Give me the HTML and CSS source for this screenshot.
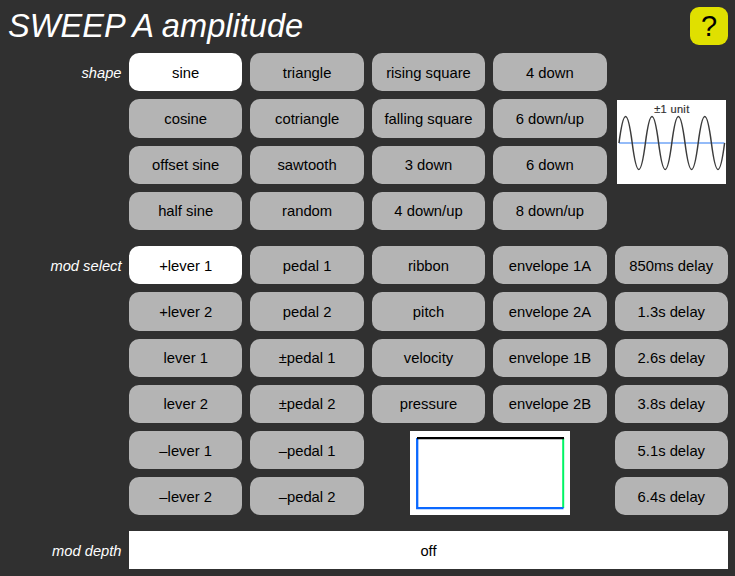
FILE: index.html
```
<!DOCTYPE html>
<html lang="en">
<head>
<meta charset="utf-8">
<title>SWEEP A amplitude</title>
<link rel="stylesheet" href="styles.css">
</head>
<body>
<header class="header">
  <h1 class="title">SWEEP A amplitude</h1>
  <button class="help">?</button>
</header>
<main>
  <section class="section">
    <div class="label">shape</div>
    <div class="grid">
      <button class="option selected">sine</button>
      <button class="option">triangle</button>
      <button class="option">rising square</button>
      <button class="option">4 down</button>
      <span></span>
      <button class="option">cosine</button>
      <button class="option">cotriangle</button>
      <button class="option">falling square</button>
      <button class="option">6 down/up</button>
      <svg class="wave" width="109" height="84" viewBox="0 0 109 84">
        <rect width="109" height="84" fill="#fff"/>
        <path d="M2 43H107.500" stroke="#94bbf8" stroke-width="2"/>
        <path d="M2 43c4.600-35.300 8.600-35.300 13.200 0s8.600 35.300 13.200 0s8.600-35.300 13.200 0s8.600 35.300 13.200 0s8.600-35.300 13.200 0s8.600 35.300 13.200 0s8.600-35.300 13.200 0s8.600 35.300 13.200 0" fill="none" stroke="#3c3c3c" stroke-width="1.500"/>
        <text class="wave-text" x="54.700" y="12.500" text-anchor="middle" textLength="35">±1 unit</text>
      </svg>
      <button class="option">offset sine</button>
      <button class="option">sawtooth</button>
      <button class="option">3 down</button>
      <button class="option">6 down</button>
      <button class="option">half sine</button>
      <button class="option">random</button>
      <button class="option">4 down/up</button>
      <button class="option">8 down/up</button>
    </div>
  </section>
  <section class="section">
    <div class="label">mod select</div>
    <div class="grid">
      <button class="option selected">+lever 1</button>
      <button class="option">pedal 1</button>
      <button class="option">ribbon</button>
      <button class="option">envelope 1A</button>
      <button class="option">850ms delay</button>
      <button class="option">+lever 2</button>
      <button class="option">pedal 2</button>
      <button class="option">pitch</button>
      <button class="option">envelope 2A</button>
      <button class="option">1.3s delay</button>
      <button class="option">lever 1</button>
      <button class="option">±pedal 1</button>
      <button class="option">velocity</button>
      <button class="option">envelope 1B</button>
      <button class="option">2.6s delay</button>
      <button class="option">lever 2</button>
      <button class="option">±pedal 2</button>
      <button class="option">pressure</button>
      <button class="option">envelope 2B</button>
      <button class="option">3.8s delay</button>
      <button class="option">–lever 1</button>
      <button class="option">–pedal 1</button>
      <svg class="envelope" width="160" height="84" viewBox="0 0 160 84">
        <rect width="160" height="84" fill="#fff"/>
        <path d="M153.200 7V77" stroke="#00f564" stroke-width="2"/>
        <path d="M7.200 7V77.200H153.500" fill="none" stroke="#0a68ff" stroke-width="2.300"/>
        <path d="M7 7.200H154" stroke="#000" stroke-width="2.300"/>
      </svg>
      <button class="option">5.1s delay</button>
      <button class="option">–lever 2</button>
      <button class="option">–pedal 2</button>
      <button class="option">6.4s delay</button>
    </div>
  </section>
  <section class="section">
    <div class="label">mod depth</div>
    <div class="depth">off</div>
  </section>
</main>
</body>
</html>
```
FILE: styles.css
```
* { box-sizing: border-box; }

body {
  margin: 0;
  height: 576px;
  padding: 7px 7px 0 8px;
  background: #303030;
  color: #fff;
  font: 14.700px "Liberation Sans", Arial, sans-serif;
  overflow: hidden;
}

.header {
  display: flex;
  justify-content: space-between;
  align-items: center;
  height: 38.200px;
  margin-bottom: 8px;
}

.title {
  margin: 0;
  font-size: 32.600px;
  font-weight: normal;
  font-style: italic;
  line-height: 38px;
}

.help, .option {
  border: 0;
  padding: 0;
  font-family: inherit;
  color: #000;
}

.help {
  width: 38px;
  height: 38px;
  border-radius: 9px;
  background: #e0e000;
  font-size: 29px;
  line-height: 38px;
}

.section {
  display: grid;
  grid-template-columns: 113.500px 599px;
  column-gap: 7.500px;
  margin-bottom: 16px;
}

.label {
  height: 38.200px;
  line-height: 41px;
  text-align: right;
  font-style: italic;
}

.grid {
  display: grid;
  grid-template-columns: repeat(5, 1fr);
  grid-auto-rows: 38.230px;
  gap: 8px;
}

.option {
  min-width: 0;
  border-radius: 10px;
  background: #b4b4b4;
  font-size: 14.800px;
  padding-top: 1px;
}

.option.selected { background: #fff; }

.wave {
  grid-column: 5;
  grid-row: 2 / span 2;
  place-self: center;
}

.wave-text {
  font-size: 11px;
  fill: #333;
  stroke: #333;
  stroke-width: 0.200px;
}

.envelope {
  grid-column: 3 / span 2;
  grid-row: 5 / span 2;
  place-self: center;
  margin-left: 1.500px;
}

.depth {
  height: 38px;
  line-height: 40px;
  background: #fff;
  color: #000;
  text-align: center;
}
```
